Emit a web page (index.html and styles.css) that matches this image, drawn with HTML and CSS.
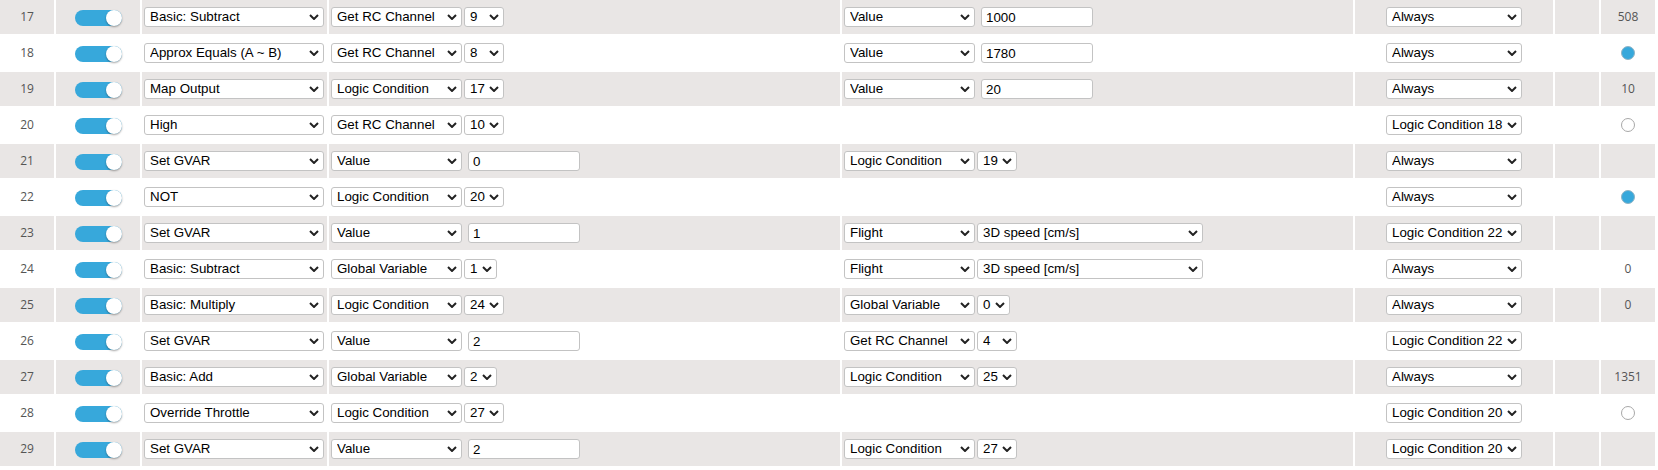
FILE: index.html
```html
<!DOCTYPE html>
<html>
<head>
<meta charset="utf-8">
<link rel="stylesheet" href="styles.css">
</head>
<body>
<table class="lc">
<colgroup>
<col class="c-id"><col class="c-en"><col class="c-op"><col class="c-a"><col class="c-b"><col class="c-act"><col class="c-fl"><col class="c-st">
</colgroup>
<tbody>
<tr>
<td class="id">17</td>
<td><span class="toggle"><span class="knob"></span></span></td>
<td><span class="sel w-op"><select><option>Basic: Subtract</option></select><svg viewBox="0 0 10 6"><path d="M1 1L5 5L9 1"/></svg></span></td>
<td><div class="ops"><span class="sel w-src"><select><option>Get RC Channel</option></select><svg viewBox="0 0 10 6"><path d="M1 1L5 5L9 1"/></svg></span><span class="sel w-n2"><select><option>9</option></select><svg viewBox="0 0 10 6"><path d="M1 1L5 5L9 1"/></svg></span></div></td>
<td><div class="ops"><span class="sel w-src"><select><option>Value</option></select><svg viewBox="0 0 10 6"><path d="M1 1L5 5L9 1"/></svg></span><input class="val" type="text" value="1000"></div></td>
<td class="ctr"><span class="sel w-act"><select><option>Always</option></select><svg viewBox="0 0 10 6"><path d="M1 1L5 5L9 1"/></svg></span></td>
<td></td>
<td class="st">508</td>
</tr>
<tr>
<td class="id">18</td>
<td><span class="toggle"><span class="knob"></span></span></td>
<td><span class="sel w-op"><select><option>Approx Equals (A ~ B)</option></select><svg viewBox="0 0 10 6"><path d="M1 1L5 5L9 1"/></svg></span></td>
<td><div class="ops"><span class="sel w-src"><select><option>Get RC Channel</option></select><svg viewBox="0 0 10 6"><path d="M1 1L5 5L9 1"/></svg></span><span class="sel w-n2"><select><option>8</option></select><svg viewBox="0 0 10 6"><path d="M1 1L5 5L9 1"/></svg></span></div></td>
<td><div class="ops"><span class="sel w-src"><select><option>Value</option></select><svg viewBox="0 0 10 6"><path d="M1 1L5 5L9 1"/></svg></span><input class="val" type="text" value="1780"></div></td>
<td class="ctr"><span class="sel w-act"><select><option>Always</option></select><svg viewBox="0 0 10 6"><path d="M1 1L5 5L9 1"/></svg></span></td>
<td></td>
<td class="st"><span class="dot on"></span></td>
</tr>
<tr>
<td class="id">19</td>
<td><span class="toggle"><span class="knob"></span></span></td>
<td><span class="sel w-op"><select><option>Map Output</option></select><svg viewBox="0 0 10 6"><path d="M1 1L5 5L9 1"/></svg></span></td>
<td><div class="ops"><span class="sel w-src"><select><option>Logic Condition</option></select><svg viewBox="0 0 10 6"><path d="M1 1L5 5L9 1"/></svg></span><span class="sel w-n2"><select><option>17</option></select><svg viewBox="0 0 10 6"><path d="M1 1L5 5L9 1"/></svg></span></div></td>
<td><div class="ops"><span class="sel w-src"><select><option>Value</option></select><svg viewBox="0 0 10 6"><path d="M1 1L5 5L9 1"/></svg></span><input class="val" type="text" value="20"></div></td>
<td class="ctr"><span class="sel w-act"><select><option>Always</option></select><svg viewBox="0 0 10 6"><path d="M1 1L5 5L9 1"/></svg></span></td>
<td></td>
<td class="st">10</td>
</tr>
<tr>
<td class="id">20</td>
<td><span class="toggle"><span class="knob"></span></span></td>
<td><span class="sel w-op"><select><option>High</option></select><svg viewBox="0 0 10 6"><path d="M1 1L5 5L9 1"/></svg></span></td>
<td><div class="ops"><span class="sel w-src"><select><option>Get RC Channel</option></select><svg viewBox="0 0 10 6"><path d="M1 1L5 5L9 1"/></svg></span><span class="sel w-n2"><select><option>10</option></select><svg viewBox="0 0 10 6"><path d="M1 1L5 5L9 1"/></svg></span></div></td>
<td></td>
<td class="ctr"><span class="sel w-act"><select><option>Logic Condition 18</option></select><svg viewBox="0 0 10 6"><path d="M1 1L5 5L9 1"/></svg></span></td>
<td></td>
<td class="st"><span class="dot off"></span></td>
</tr>
<tr>
<td class="id">21</td>
<td><span class="toggle"><span class="knob"></span></span></td>
<td><span class="sel w-op"><select><option>Set GVAR</option></select><svg viewBox="0 0 10 6"><path d="M1 1L5 5L9 1"/></svg></span></td>
<td><div class="ops"><span class="sel w-src"><select><option>Value</option></select><svg viewBox="0 0 10 6"><path d="M1 1L5 5L9 1"/></svg></span><input class="val" type="text" value="0"></div></td>
<td><div class="ops"><span class="sel w-src"><select><option>Logic Condition</option></select><svg viewBox="0 0 10 6"><path d="M1 1L5 5L9 1"/></svg></span><span class="sel w-n2"><select><option>19</option></select><svg viewBox="0 0 10 6"><path d="M1 1L5 5L9 1"/></svg></span></div></td>
<td class="ctr"><span class="sel w-act"><select><option>Always</option></select><svg viewBox="0 0 10 6"><path d="M1 1L5 5L9 1"/></svg></span></td>
<td></td>
<td class="st"></td>
</tr>
<tr>
<td class="id">22</td>
<td><span class="toggle"><span class="knob"></span></span></td>
<td><span class="sel w-op"><select><option>NOT</option></select><svg viewBox="0 0 10 6"><path d="M1 1L5 5L9 1"/></svg></span></td>
<td><div class="ops"><span class="sel w-src"><select><option>Logic Condition</option></select><svg viewBox="0 0 10 6"><path d="M1 1L5 5L9 1"/></svg></span><span class="sel w-n2"><select><option>20</option></select><svg viewBox="0 0 10 6"><path d="M1 1L5 5L9 1"/></svg></span></div></td>
<td></td>
<td class="ctr"><span class="sel w-act"><select><option>Always</option></select><svg viewBox="0 0 10 6"><path d="M1 1L5 5L9 1"/></svg></span></td>
<td></td>
<td class="st"><span class="dot on"></span></td>
</tr>
<tr>
<td class="id">23</td>
<td><span class="toggle"><span class="knob"></span></span></td>
<td><span class="sel w-op"><select><option>Set GVAR</option></select><svg viewBox="0 0 10 6"><path d="M1 1L5 5L9 1"/></svg></span></td>
<td><div class="ops"><span class="sel w-src"><select><option>Value</option></select><svg viewBox="0 0 10 6"><path d="M1 1L5 5L9 1"/></svg></span><input class="val" type="text" value="1"></div></td>
<td><div class="ops"><span class="sel w-src"><select><option>Flight</option></select><svg viewBox="0 0 10 6"><path d="M1 1L5 5L9 1"/></svg></span><span class="sel w-fl"><select><option>3D speed [cm/s]</option></select><svg viewBox="0 0 10 6"><path d="M1 1L5 5L9 1"/></svg></span></div></td>
<td class="ctr"><span class="sel w-act"><select><option>Logic Condition 22</option></select><svg viewBox="0 0 10 6"><path d="M1 1L5 5L9 1"/></svg></span></td>
<td></td>
<td class="st"></td>
</tr>
<tr>
<td class="id">24</td>
<td><span class="toggle"><span class="knob"></span></span></td>
<td><span class="sel w-op"><select><option>Basic: Subtract</option></select><svg viewBox="0 0 10 6"><path d="M1 1L5 5L9 1"/></svg></span></td>
<td><div class="ops"><span class="sel w-src"><select><option>Global Variable</option></select><svg viewBox="0 0 10 6"><path d="M1 1L5 5L9 1"/></svg></span><span class="sel w-n1"><select><option>1</option></select><svg viewBox="0 0 10 6"><path d="M1 1L5 5L9 1"/></svg></span></div></td>
<td><div class="ops"><span class="sel w-src"><select><option>Flight</option></select><svg viewBox="0 0 10 6"><path d="M1 1L5 5L9 1"/></svg></span><span class="sel w-fl"><select><option>3D speed [cm/s]</option></select><svg viewBox="0 0 10 6"><path d="M1 1L5 5L9 1"/></svg></span></div></td>
<td class="ctr"><span class="sel w-act"><select><option>Always</option></select><svg viewBox="0 0 10 6"><path d="M1 1L5 5L9 1"/></svg></span></td>
<td></td>
<td class="st">0</td>
</tr>
<tr>
<td class="id">25</td>
<td><span class="toggle"><span class="knob"></span></span></td>
<td><span class="sel w-op"><select><option>Basic: Multiply</option></select><svg viewBox="0 0 10 6"><path d="M1 1L5 5L9 1"/></svg></span></td>
<td><div class="ops"><span class="sel w-src"><select><option>Logic Condition</option></select><svg viewBox="0 0 10 6"><path d="M1 1L5 5L9 1"/></svg></span><span class="sel w-n2"><select><option>24</option></select><svg viewBox="0 0 10 6"><path d="M1 1L5 5L9 1"/></svg></span></div></td>
<td><div class="ops"><span class="sel w-src"><select><option>Global Variable</option></select><svg viewBox="0 0 10 6"><path d="M1 1L5 5L9 1"/></svg></span><span class="sel w-n1"><select><option>0</option></select><svg viewBox="0 0 10 6"><path d="M1 1L5 5L9 1"/></svg></span></div></td>
<td class="ctr"><span class="sel w-act"><select><option>Always</option></select><svg viewBox="0 0 10 6"><path d="M1 1L5 5L9 1"/></svg></span></td>
<td></td>
<td class="st">0</td>
</tr>
<tr>
<td class="id">26</td>
<td><span class="toggle"><span class="knob"></span></span></td>
<td><span class="sel w-op"><select><option>Set GVAR</option></select><svg viewBox="0 0 10 6"><path d="M1 1L5 5L9 1"/></svg></span></td>
<td><div class="ops"><span class="sel w-src"><select><option>Value</option></select><svg viewBox="0 0 10 6"><path d="M1 1L5 5L9 1"/></svg></span><input class="val" type="text" value="2"></div></td>
<td><div class="ops"><span class="sel w-src"><select><option>Get RC Channel</option></select><svg viewBox="0 0 10 6"><path d="M1 1L5 5L9 1"/></svg></span><span class="sel w-n2"><select><option>4</option></select><svg viewBox="0 0 10 6"><path d="M1 1L5 5L9 1"/></svg></span></div></td>
<td class="ctr"><span class="sel w-act"><select><option>Logic Condition 22</option></select><svg viewBox="0 0 10 6"><path d="M1 1L5 5L9 1"/></svg></span></td>
<td></td>
<td class="st"></td>
</tr>
<tr>
<td class="id">27</td>
<td><span class="toggle"><span class="knob"></span></span></td>
<td><span class="sel w-op"><select><option>Basic: Add</option></select><svg viewBox="0 0 10 6"><path d="M1 1L5 5L9 1"/></svg></span></td>
<td><div class="ops"><span class="sel w-src"><select><option>Global Variable</option></select><svg viewBox="0 0 10 6"><path d="M1 1L5 5L9 1"/></svg></span><span class="sel w-n1"><select><option>2</option></select><svg viewBox="0 0 10 6"><path d="M1 1L5 5L9 1"/></svg></span></div></td>
<td><div class="ops"><span class="sel w-src"><select><option>Logic Condition</option></select><svg viewBox="0 0 10 6"><path d="M1 1L5 5L9 1"/></svg></span><span class="sel w-n2"><select><option>25</option></select><svg viewBox="0 0 10 6"><path d="M1 1L5 5L9 1"/></svg></span></div></td>
<td class="ctr"><span class="sel w-act"><select><option>Always</option></select><svg viewBox="0 0 10 6"><path d="M1 1L5 5L9 1"/></svg></span></td>
<td></td>
<td class="st">1351</td>
</tr>
<tr>
<td class="id">28</td>
<td><span class="toggle"><span class="knob"></span></span></td>
<td><span class="sel w-op"><select><option>Override Throttle</option></select><svg viewBox="0 0 10 6"><path d="M1 1L5 5L9 1"/></svg></span></td>
<td><div class="ops"><span class="sel w-src"><select><option>Logic Condition</option></select><svg viewBox="0 0 10 6"><path d="M1 1L5 5L9 1"/></svg></span><span class="sel w-n2"><select><option>27</option></select><svg viewBox="0 0 10 6"><path d="M1 1L5 5L9 1"/></svg></span></div></td>
<td></td>
<td class="ctr"><span class="sel w-act"><select><option>Logic Condition 20</option></select><svg viewBox="0 0 10 6"><path d="M1 1L5 5L9 1"/></svg></span></td>
<td></td>
<td class="st"><span class="dot off"></span></td>
</tr>
<tr>
<td class="id">29</td>
<td><span class="toggle"><span class="knob"></span></span></td>
<td><span class="sel w-op"><select><option>Set GVAR</option></select><svg viewBox="0 0 10 6"><path d="M1 1L5 5L9 1"/></svg></span></td>
<td><div class="ops"><span class="sel w-src"><select><option>Value</option></select><svg viewBox="0 0 10 6"><path d="M1 1L5 5L9 1"/></svg></span><input class="val" type="text" value="2"></div></td>
<td><div class="ops"><span class="sel w-src"><select><option>Logic Condition</option></select><svg viewBox="0 0 10 6"><path d="M1 1L5 5L9 1"/></svg></span><span class="sel w-n2"><select><option>27</option></select><svg viewBox="0 0 10 6"><path d="M1 1L5 5L9 1"/></svg></span></div></td>
<td class="ctr"><span class="sel w-act"><select><option>Logic Condition 20</option></select><svg viewBox="0 0 10 6"><path d="M1 1L5 5L9 1"/></svg></span></td>
<td></td>
<td class="st"></td>
</tr>
</tbody>
</table>
</body>
</html>
```

FILE: styles.css
```css
html, body {
  margin: 0;
  padding: 0;
  background: #fff;
  overflow: hidden;
}

body {
  font-family: "Open Sans", "Liberation Sans", Arial, sans-serif;
  font-size: 12px;
  color: #555;
}

.lc {
  table-layout: fixed;
  width: 1659px;
  border-collapse: separate;
  border-spacing: 2px;
  margin: -2px 0 0 -2px;
  background: #fff;
}

.c-id { width: 54px; }
.c-en { width: 84px; }
.c-op { width: 185px; }
.c-a { width: 511px; }
.c-b { width: 511px; }
.c-act { width: 198px; }
.c-fl { width: 44px; }
.c-st { width: 54px; }

.lc tr:nth-child(odd) td {
  background: #e9e6e5;
}

.lc td {
  height: 34px;
  padding: 0 2px;
  box-sizing: border-box;
  vertical-align: middle;
  line-height: 1;
}

.lc td.id,
.lc td.st,
.lc td.ctr {
  text-align: center;
}

.toggle {
  display: flex;
  justify-content: flex-end;
  width: 47px;
  height: 16px;
  margin: 2px auto 0;
  border-radius: 8px;
  background: #37a8db;
}

.knob {
  width: 16px;
  height: 16px;
  border-radius: 50%;
  background: #fff;
  box-shadow: 0 1px 2px rgba(0, 0, 0, 0.35);
}

.ops {
  display: flex;
  align-items: center;
  gap: 2px;
}

.sel {
  position: relative;
  display: inline-block;
  height: 20px;
  vertical-align: middle;
}

.sel select {
  -webkit-appearance: none;
  appearance: none;
  display: block;
  width: 100%;
  height: 20px;
  margin: 0;
  padding: 0 16px 0 5px;
  box-sizing: border-box;
  border: 1px solid #c3c3c3;
  border-radius: 3px;
  background: #fff;
  color: #000;
  font-family: "Liberation Sans", Arial, sans-serif;
  font-size: 13.333px;
  line-height: 18px;
}

.sel svg {
  position: absolute;
  right: 5px;
  top: 7px;
  width: 10px;
  height: 6px;
  fill: none;
  stroke: #222;
  stroke-width: 2;
  pointer-events: none;
}

.w-op { width: 180px; }
.w-src { width: 131px; }
.w-n2 { width: 40px; }
.w-n1 { width: 33px; }
.w-fl { width: 226px; }
.w-act { width: 136px; }

.val {
  width: 112px;
  height: 20px;
  margin: 0 0 0 4px;
  padding: 0 4px;
  box-sizing: border-box;
  border: 1px solid #c3c3c3;
  border-radius: 3px;
  background: #fff;
  color: #000;
  font-family: "Liberation Sans", Arial, sans-serif;
  font-size: 13.333px;
}

.st {
  font-size: 12px;
}

.dot {
  display: block;
  width: 14px;
  height: 14px;
  margin: 0 auto;
  border-radius: 50%;
  box-sizing: border-box;
}

.dot.on {
  background: #37a8db;
  border: 1px solid #8fb4c6;
}

.dot.off {
  background: #fff;
  border: 1px solid #a8a8a8;
}
```
